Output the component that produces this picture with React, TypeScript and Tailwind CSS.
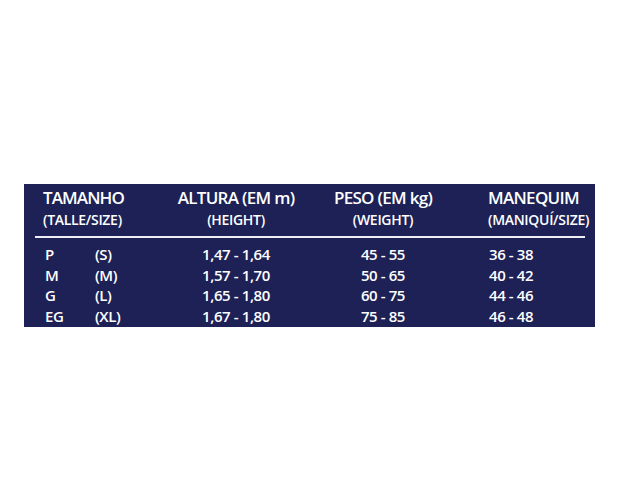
const ROWS = [
  { pt: 'P', es: '(S)', altura: '1,47 - 1,64', peso: '45 - 55', manequim: '36 - 38' },
  { pt: 'M', es: '(M)', altura: '1,57 - 1,70', peso: '50 - 65', manequim: '40 - 42' },
  { pt: 'G', es: '(L)', altura: '1,65 - 1,80', peso: '60 - 75', manequim: '44 - 46' },
  { pt: 'EG', es: '(XL)', altura: '1,67 - 1,80', peso: '75 - 85', manequim: '46 - 48' },
]

export default function App() {
  return (
    <div className="w-[642px] h-[502px] bg-white pt-[184px] pl-[24px] font-['Open_Sans',sans-serif]">
      <div className="w-[571px] h-[143px] bg-[#1d2156] text-white pt-[4px]">
        {/* header */}
        <div className="flex">
          <div className="w-[124px] ml-[19px]">
            <div className="text-[17px] leading-[20px] font-semibold tracking-[-0.9px]">TAMANHO</div>
            <div className="text-[14px] leading-[18px] mt-[3px] font-semibold tracking-[-0.3px]">(TALLE/SIZE)</div>
          </div>
          <div className="w-[138px] text-center">
            <div className="text-[17px] leading-[20px] font-semibold tracking-[-0.7px] whitespace-nowrap">ALTURA (EM m)</div>
            <div className="text-[14px] leading-[18px] mt-[3px] font-semibold tracking-[-0.3px]">(HEIGHT)</div>
          </div>
          <div className="w-[156px] text-center">
            <div className="text-[17px] leading-[20px] font-semibold tracking-[-0.7px] whitespace-nowrap">PESO (EM kg)</div>
            <div className="text-[14px] leading-[18px] mt-[3px] font-semibold tracking-[-0.3px]">(WEIGHT)</div>
          </div>
          <div className="pl-[27px]">
            <div className="text-[17px] leading-[20px] font-semibold tracking-[-0.7px]">MANEQUIM</div>
            <div className="text-[14px] leading-[18px] mt-[3px] font-semibold tracking-[-0.3px] whitespace-nowrap">(MANIQUÍ/SIZE)</div>
          </div>
        </div>

        <div className="h-[2px] bg-[#eef0f6] ml-[11px] mr-[10px] mt-[7px]" />

        {/* rows */}
        <div className="mt-[6px]">
          {ROWS.map((r) => (
            <div key={r.pt} className="flex text-[15px] leading-[20.7px] font-semibold tracking-[-0.4px]">
              <div className="w-[124px] ml-[19px] flex">
                <span className="w-[52px] pl-[2px]">{r.pt}</span>
                <span>{r.es}</span>
              </div>
              <div className="w-[138px] text-center">{r.altura}</div>
              <div className="w-[156px] text-center">{r.peso}</div>
              <div className="pl-[28px]">{r.manequim}</div>
            </div>
          ))}
        </div>
      </div>
    </div>
  )
}
